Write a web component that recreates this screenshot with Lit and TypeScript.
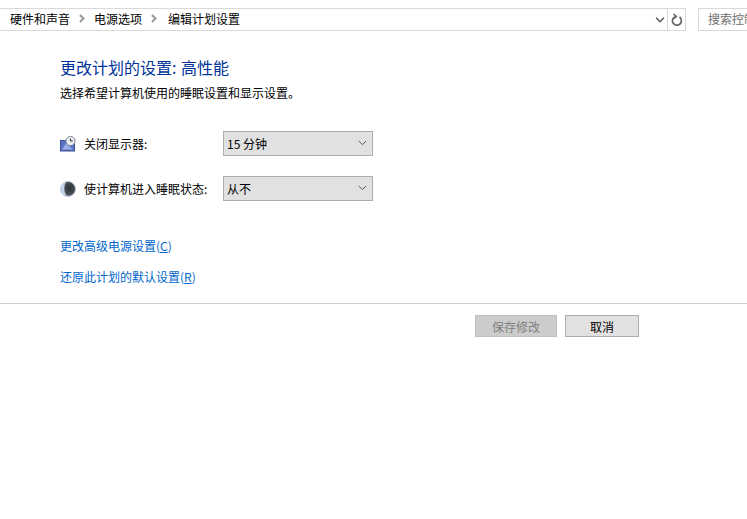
import { LitElement, html, css } from "lit";
import { customElement } from "lit/decorators.js";

const chevron = html`<svg class="crumb-sep" width="6" height="9" viewBox="0 0 6 9"><path d="M1 1l3.5 3.5L1 8" fill="none" stroke="#999" stroke-width="2"/></svg>`;
const down = (c: string, w: number, s: number) => html`<svg width="${s}" height="${Math.ceil(s * 0.6)}" viewBox="0 0 11 7"><path d="M1 1l4.5 4.5L10 1" fill="none" stroke="${c}" stroke-width="${w}"/></svg>`;

@customElement("app-root")
export class AppRoot extends LitElement {
  static styles = css`
    :host { display: block; width: 747px; height: 519px; background: #fff; color: #000; overflow: hidden;
      font-family: "Noto Sans CJK SC", "Liberation Sans", sans-serif; font-size: 12px; }
    .top { display: flex; padding-top: 8px; height: 23px; }
    .address { width: 686px; height: 23px; box-sizing: border-box; border: 1px solid #d9d9d9; border-left: 0; display: flex; align-items: center; }
    .crumbs { flex: 1; display: flex; align-items: center; padding: 0 0 2px 10px; gap: 9px; line-height: 18px; white-space: nowrap; }
    .crumbs span:last-child { margin-left: 2px; }
    .drop { width: 12px; display: flex; justify-content: center; margin-right: 1px; }
    .refresh { width: 17px; height: 21px; border-left: 1px solid #d9d9d9; display: flex; align-items: center; justify-content: center; }
    .search { margin-left: 12px; flex: 1; height: 23px; box-sizing: border-box; border: 1px solid #d9d9d9; border-right: 0; color: #6d6d6d; padding-left: 9px; line-height: 20px; white-space: nowrap; overflow: hidden; }
    .main { padding: 25px 0 0 60px; }
    h1 { margin: 0; font-weight: 400; font-size: 16px; line-height: 22px; color: #003399; word-spacing: 1px; }
    .sub { margin-top: 6px; line-height: 18px; }
    .rows { margin-top: 29px; display: flex; flex-direction: column; gap: 20px; }
    .row { display: flex; align-items: center; height: 25px; }
    .label { width: 139px; line-height: 18px; white-space: nowrap; }
    .ico { width: 16px; height: 16px; margin-right: 8px; flex: none; }
    .select { width: 150px; height: 25px; box-sizing: border-box; border: 1px solid #adadad; background: #e1e1e1; display: flex; align-items: center; justify-content: space-between; padding: 0 3px 1px 3px; }
    .select svg { margin-right: 2px; }
    .links { margin-top: 36px; display: flex; flex-direction: column; gap: 13px; }
    .link { color: #0066cc; line-height: 18px; }
    .link u { text-underline-offset: 1px; }
    .sep { height: 1px; background: #cfcfcf; margin-top: 17px; }
    .actions { display: flex; gap: 8px; padding: 11px 0 0 475px; }
    .btn { height: 22px; box-sizing: border-box; border: 1px solid #adadad; background: #e1e1e1; display: flex; align-items: center; justify-content: center; }
    .save { width: 82px; background: #cccccc; border-color: #bfbfbf; color: #808080; }
    .cancel { width: 74px; }
  `;

  render() {
    return html`
      <div class="top">
        <div class="address">
          <div class="crumbs"><span>硬件和声音</span>${chevron}<span>电源选项</span>${chevron}<span>编辑计划设置</span></div>
          <div class="drop">${down("#555", 1.6, 10)}</div>
          <div class="refresh">
            <svg width="12" height="14" viewBox="0 0 12 14"><path d="M4 3.6A4.5 4.5 0 1 0 8.5 4" fill="none" stroke="#606060" stroke-width="1.6"/><path d="M2.5 1l3 2.6L2.5 6" fill="none" stroke="#606060" stroke-width="1.4"/></svg>
          </div>
        </div>
        <div class="search">搜索控制面板</div>
      </div>
      <div class="main">
        <h1>更改计划的设置: 高性能</h1>
        <div class="sub">选择希望计算机使用的睡眠设置和显示设置。</div>
        <div class="rows">
          <div class="row">
            <svg class="ico" viewBox="0 0 16 16">
              <rect x="0.5" y="4.5" width="14" height="10.5" fill="#5a72c8" stroke="#3c4f94"/>
              <path d="M2 13.5l4-6 7 6z" fill="#9fb0e8"/>
              <circle cx="10.5" cy="5" r="4.6" fill="#eceef2" stroke="#7c8694"/>
              <path d="M10.5 2.5V5h2.2" fill="none" stroke="#333" stroke-width="1"/>
            </svg>
            <div class="label">关闭显示器:</div>
            <div class="select"><span>15 分钟</span>${down("#555", 1.2, 9)}</div>
          </div>
          <div class="row">
            <svg class="ico" viewBox="0 0 16 16">
              <defs><radialGradient id="m" cx="0.6" cy="0.45" r="0.6"><stop offset="0" stop-color="#2e3238"/><stop offset="0.7" stop-color="#4b5058"/><stop offset="1" stop-color="#9aa8c2"/></radialGradient></defs>
              <circle cx="8" cy="8" r="7.5" fill="url(#m)" stroke="#b5c2da" stroke-width="0.8"/>
              <path d="M6 1C2 2 .8 5 .8 8s2 6 6 7C4 12 3.5 5 6 1z" fill="#c3d3ec"/>
            </svg>
            <div class="label">使计算机进入睡眠状态:</div>
            <div class="select"><span>从不</span>${down("#555", 1.2, 9)}</div>
          </div>
        </div>
        <div class="links">
          <div class="link">更改高级电源设置(<u>C</u>)</div>
          <div class="link">还原此计划的默认设置(<u>R</u>)</div>
        </div>
      </div>
      <div class="sep"></div>
      <div class="actions">
        <div class="btn save">保存修改</div>
        <div class="btn cancel">取消</div>
      </div>
    `;
  }
}
